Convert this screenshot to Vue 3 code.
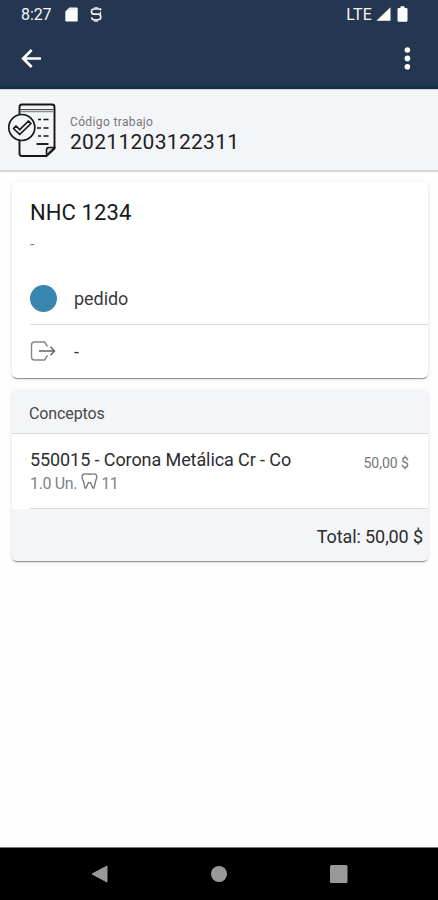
<script setup>
const job = { label: 'Código trabajo', code: '20211203122311' }
const concepts = [
  { name: '550015 - Corona Metálica Cr - Co', units: '1.0 Un.', tooth: '11', price: '50,00 $' },
]
</script>

<template>
  <div class="screen">
    <header class="top">
      <div class="status">
        <span class="clock">8:27</span>
        <svg class="sd" width="13" height="15" viewBox="0 0 13 15">
          <path d="M4.4.5H11.5Q12.7.5 12.7 1.7V13.3Q12.7 14.5 11.5 14.5H1.5Q.3 14.5.3 13.3V4.6Z" fill="#fff" />
          <path d="M4.7 1.5v1.5M7.1 1.5v1.5M9.5 1.5v1.5" stroke="#b9bfca" stroke-width="1" />
        </svg>
        <svg class="sync" width="12" height="15" viewBox="0 0 12 15" fill="none" stroke="#f2f4f7" stroke-width="1.6">
          <path d="M10.5 3.6V2H4A2.6 2.6 0 0 0 4 7.2H8A2.8 2.8 0 0 1 8 12.8H4Q1.8 12.8 1.8 10.2" />
          <path d="M2 7.2H10.5V4.8M4.2.8h4M4 14.2h4" stroke-width="1.2" />
        </svg>
        <span class="lte">LTE</span>
        <svg class="signal" width="15" height="14" viewBox="0 0 15 14"><path d="M14.5.2V13.8H.4Z" fill="#fff" /></svg>
        <svg class="battery" width="11" height="16" viewBox="0 0 11 16">
          <path d="M3.5.3h4v1.6h1.7q1.3 0 1.3 1.3V14.4q0 1.3-1.3 1.3H1.8Q.5 15.7.5 14.4V3.2q0-1.3 1.3-1.3h1.7Z" fill="#fff" />
        </svg>
      </div>
      <div class="toolbar">
        <svg width="22" height="20" viewBox="0 0 22 20" fill="none" stroke="#fff" stroke-width="2.7">
          <path d="M21 10.5H3M11.7 2L3.2 10.5l8.5 8.5" />
        </svg>
        <svg width="8" height="24" viewBox="0 0 8 24" fill="#fff">
          <circle cx="4.4" cy="4" r="2.8" /><circle cx="4.4" cy="12.4" r="2.8" /><circle cx="4.4" cy="20.8" r="2.8" />
        </svg>
      </div>
    </header>

    <section class="job">
      <svg width="50" height="56" viewBox="0 0 50 56" fill="none" stroke="#15161a" stroke-width="1.9">
        <path d="M11.5 11V4q0-2.5 2.5-2.5H44Q46.500 1.500 46.500 4V45.500L38.500 53H14Q11.500 53 11.500 50.500V38" />
        <path d="M38.500 52.500V47Q38.500 44.500 41 44.500H46.500Z" fill="#d0d1d5" stroke-width="1.500" />
        <path d="M12 6.500H46" stroke="#4b4d53" stroke-width="1.200" />
        <path d="M12 8.500H46" stroke="#888b92" stroke-width="1.700" />
        <path d="M30 16.500h3M35.500 16.500h5M29 25h4M35.500 25h5M30 33h3M35.500 33h5" stroke-width="1.700" />
        <path d="M28.500 41h12" />
        <circle cx="13.800" cy="24.500" r="13" fill="#f4f5f9" stroke-width="1.700" />
        <path d="M5.500 25.500l2.500-2.500 3.700 3.600 8.800-8.600 2.500 2.500L11.700 31.500Z" stroke-width="1.700" stroke-linejoin="round" />
      </svg>
      <div class="job-text">
        <span class="job-label">{{ job.label }}</span>
        <span class="job-code">{{ job.code }}</span>
      </div>
    </section>

    <main class="content">
      <section class="card patient">
        <h1>NHC 1234</h1>
        <p class="note">-</p>
        <div class="row state">
          <span class="lead"><i class="dot"></i></span>
          <span>pedido</span>
        </div>
        <div class="row exit">
          <span class="lead">
            <svg width="26" height="20" viewBox="0 0 26 20" fill="none" stroke="#5f6163" stroke-width="1.400">
              <path d="M17.500 5.500L14.500 1H4.500Q1.500 1 1.500 4V16Q1.500 19 4.500 19H14.500L17.500 14.500" stroke="#858789" stroke-linejoin="round" />
              <path d="M9 10H24M20.500 5.800L24.500 10 20.500 14.200" />
            </svg>
          </span>
          <span>-</span>
        </div>
      </section>

      <section class="card concepts">
        <h2>Conceptos</h2>
        <div v-for="c in concepts" :key="c.name" class="concept">
          <div class="concept-info">
            <span class="name">{{ c.name }}</span>
            <span class="detail">
              <span class="units">{{ c.units }}</span>
              <svg width="17" height="17" viewBox="0 0 17 17" fill="none" stroke="#7b7d80" stroke-width="1.400" stroke-linejoin="round">
                <path d="M3.500 1Q6 .7 8.500 1.300Q11 .7 13.500 1Q16 1.200 15.700 4.500Q15.300 6.500 14.600 8L13 15H11.800L10 10.500Q8.500 8.500 7 10.500L5.200 15H4L2.400 8Q1.200 6.500 1.100 4.500Q1 1.200 3.500 1Z" />
              </svg>
              <span class="tooth">{{ c.tooth }}</span>
            </span>
          </div>
          <span class="price">{{ c.price }}</span>
        </div>
        <div class="total">Total: 50,00 $</div>
      </section>
    </main>

    <nav class="nav">
      <svg width="17" height="18" viewBox="0 0 17 18"><path d="M16 1V17L1 9Z" fill="#999" stroke="#999" stroke-linejoin="round" /></svg>
      <svg width="16" height="18" viewBox="0 0 16 18"><circle cx="8" cy="9" r="8" fill="#999" /></svg>
      <svg width="18" height="18" viewBox="0 0 18 18"><rect width="17.500" height="18" rx="1.500" fill="#999" /></svg>
    </nav>
  </div>
</template>

<style>
body {
  margin: 0;
  background: #fff;
}
</style>

<style scoped>
.screen {
  width: 438px;
  height: 900px;
  display: flex;
  flex-direction: column;
  overflow: hidden;
  background: #fefefe;
  color: #222;
  font-family: Roboto, "Liberation Sans", sans-serif;
}
svg {
  display: block;
  flex: none;
}
.top {
  height: 89px;
  box-sizing: border-box;
  background: #253650;
  border-bottom: 3px solid #14304b;
  color: #f4f6f9;
}
.status {
  height: 28px;
  display: flex;
  align-items: center;
  padding: 0 30px 0 21px;
  font-size: 16px;
}
.clock {
  width: 44px;
  letter-spacing: -0.1px;
}
.sync {
  margin-left: 12px;
}
.lte {
  margin-left: auto;
  letter-spacing: 0.2px;
}
.signal {
  margin-left: 4px;
}
.battery {
  margin-left: 6px;
}
.toolbar {
  height: 60px;
  display: flex;
  align-items: center;
  justify-content: space-between;
  padding: 0 27px 0 20px;
}
.job {
  height: 83px;
  box-sizing: border-box;
  display: flex;
  align-items: flex-start;
  gap: 12px;
  padding: 13px 8px 0;
  background: #f4f5f9;
  border-top: 1px solid #d4d1da;
  border-bottom: 2px solid #d5d7d9;
}
.job-text {
  display: flex;
  flex-direction: column;
  padding-top: 11px;
}
.job-label {
  font-size: 12px;
  line-height: 16px;
  letter-spacing: 0.36px;
  color: #747578;
}
.job-code {
  font-size: 21px;
  line-height: 25px;
  letter-spacing: 0.3px;
  color: #1d1e20;
}
.content {
  flex: 1;
  display: flex;
  flex-direction: column;
  gap: 12px;
  padding: 10px 10px 0 12px;
}
.card {
  border-radius: 5px;
  background: #fff;
  box-shadow: 0 2px 1px -1px rgba(0, 0, 0, 0.28), 0 1px 1px rgba(0, 0, 0, 0.16), 0 1px 4px rgba(0, 0, 0, 0.12);
  overflow: hidden;
}
.patient {
  height: 196px;
  box-sizing: border-box;
  padding: 17px 0 0 18px;
}
h1 {
  margin: 0;
  font-size: 22px;
  line-height: 28px;
  font-weight: 400;
  letter-spacing: 0.1px;
  color: #17181a;
}
.note {
  margin: 8px 0 0;
  font-size: 16px;
  line-height: 20px;
  color: #888;
}
.row {
  display: flex;
  align-items: center;
  font-size: 18px;
  letter-spacing: -0.05px;
  color: #3a3b3d;
}
.lead {
  width: 44px;
}
.state {
  height: 51px;
  margin-top: 18px;
  border-bottom: 1px solid #dedede;
}
.exit {
  height: 52px;
}
.dot {
  display: block;
  width: 27px;
  height: 27px;
  border-radius: 50%;
  background: #3987ae;
}
.concepts {
  height: 171px;
}
h2 {
  height: 43px;
  margin: 0;
  padding-left: 17px;
  border-bottom: 1px solid #d6d8da;
  background: #f3f5f8;
  font-size: 16px;
  line-height: 47px;
  font-weight: 400;
  letter-spacing: -0.1px;
  color: #47494c;
}
.concept {
  height: 75px;
  box-sizing: border-box;
  display: flex;
  justify-content: space-between;
  align-items: flex-start;
  margin-left: 18px;
  padding: 14px 19px 0 0;
  border-bottom: 1px solid #dcdfe1;
}
.concept-info {
  display: flex;
  flex-direction: column;
}
.name {
  font-size: 18px;
  line-height: 24px;
  letter-spacing: -0.09px;
  color: #2c2d2f;
}
.detail {
  display: flex;
  align-items: center;
  font-size: 16px;
  line-height: 23px;
  letter-spacing: -0.35px;
  color: #808285;
}
.detail svg {
  margin-top: -4px;
}
.tooth {
  margin-left: 3px;
}
.units {
  margin-right: 4px;
}
.price {
  padding-top: 5px;
  font-size: 14px;
  line-height: 20px;
  color: #747679;
}
.total {
  height: 52px;
  padding-right: 5px;
  background: #f3f5f8;
  text-align: right;
  font-size: 18px;
  line-height: 55px;
  letter-spacing: -0.1px;
  color: #2c2d2f;
}
.nav {
  height: 53px;
  box-sizing: border-box;
  display: flex;
  align-items: center;
  justify-content: space-between;
  padding: 0 90px 0 91px;
  background: #000;
  border-top: 1px solid #777;
}
</style>
